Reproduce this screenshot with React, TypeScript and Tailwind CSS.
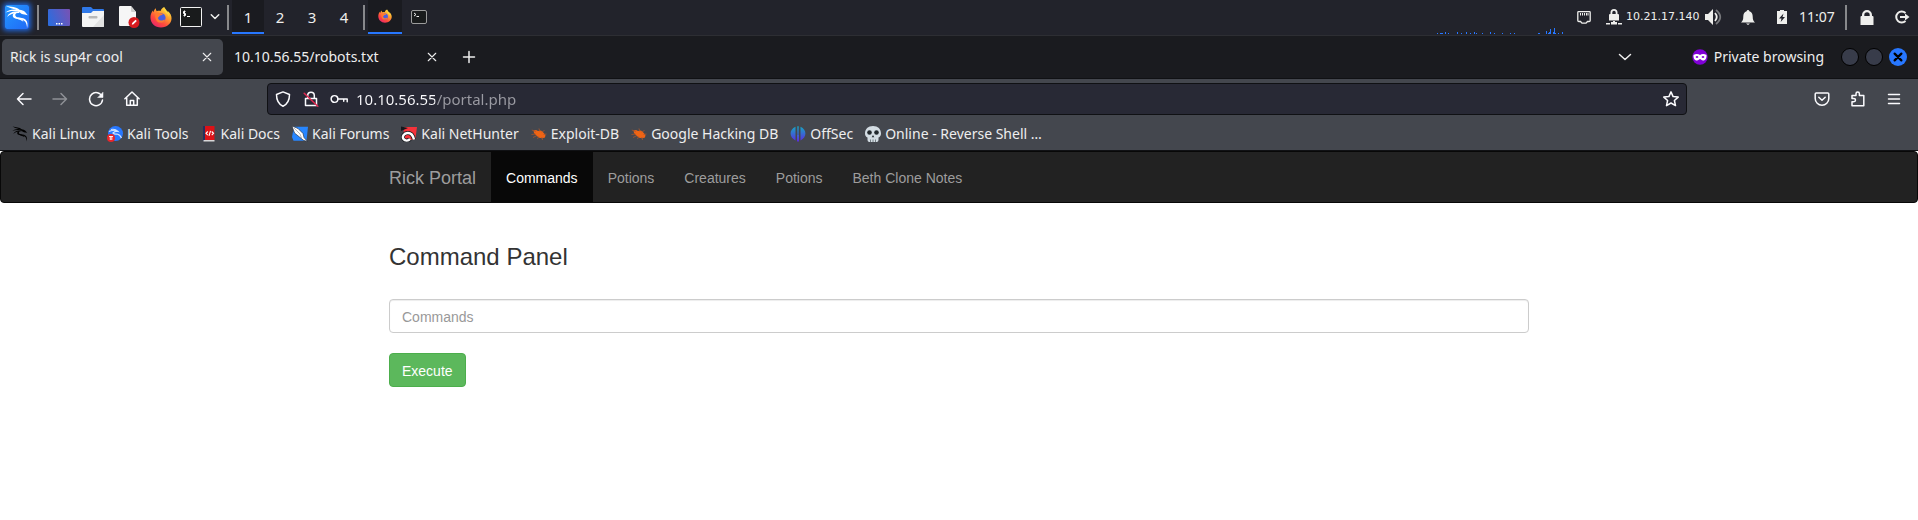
import React, { useState } from "react";

type IconProps = { className?: string };

function Firefox({ className }: IconProps) {
  return (
    <svg viewBox="0 0 24 24" className={className} aria-hidden="true">
      <defs>
        <linearGradient id="fx-body" x1="0.85" y1="0.05" x2="0.2" y2="0.95">
          <stop offset="0" stopColor="#fff04a" />
          <stop offset="0.35" stopColor="#ffa02e" />
          <stop offset="0.7" stopColor="#ff4a3d" />
          <stop offset="1" stopColor="#e8266a" />
        </linearGradient>
      </defs>
      <path d="M15.5 1c-.3 2.600 1.400 3.600 2.600 5.200.5.600.800 1.200 1 1.800.3-1 .2-2 0-2.900 3 2.300 4.400 5.200 4.400 8.300C23.500 19.200 18.500 23.500 12 23.500S.5 19 .5 12.600C.5 9.500 1.500 7 3.100 4.800c.1.800.3 1.400.6 1.900.500-1.700 1.300-3 2.600-4.200 0 1.300.4 2.400 1.100 3.200 1.300-.5 2.900-.6 4.200-.2C12 3.500 13.400 1.800 15.500 1z" fill="url(#fx-body)" />
      <circle cx="12" cy="12.800" r="5" fill="#4a5fe0" />
      <path d="M6 7.500c2-.700 4-.300 5.600.500l2.600.4c-.3 1.300-1.700 1.700-3 2-1.300.4-1 1.800-2.400 2.200-.300 2 1.200 3.400 3.300 3.200 1.800-.1 2.600-1 4.400-.9-1 2.600-3.200 3.500-5.300 3.200C7.300 17.600 5 14.500 6 7.500z" fill="#ff7a30" />
      <path d="M15.500 1c2 3.500 5.600 6 5.400 11.300-.5-2.300-1.700-3.800-3.300-4.800-1.500-1.500-3-3.500-2.100-6.500z" fill="#ffd83d" />
    </svg>
  );
}

function Dragon({ className }: IconProps) {
  return (
    <svg viewBox="0 0 24 24" className={className} fill="currentColor" aria-hidden="true">
      <path d="M.8.8C6 2 11.500 1.800 14.500 4.800c2.300.1 4.300.9 5.600 2.200l2.700 3.300-3.300-.7c-2.300-.2-4.200-1.300-5.300-2.800C11 3.700 5 3.800.8.8z" />
      <path d="M.5 7.500C4 4.600 9.500 3.400 14.500 5.800l.3 1.400C10 5.200 5 5.800.5 7.500z" />
      <path d="M2 12c2-4.500 6.500-6.300 12-5l.6 1C9 7.800 5 9 2 12z" />
      <path d="M9.300 7.800C7 9.500 7.400 12.300 9.700 13.300c3.300 1.400 8 .6 10.300 3.200 1.300 1.500 2 4 2 6.800 1-3.600.7-7-1.500-8.800-2.800-2.400-7-1.500-9.300-2.800-1.500-.9-1.200-2.700.600-3.900z" />
      <path d="M13 12.500c2.800.8 4.600 2 5.500 4l-1-.2c-1.500-1.200-3.300-1.800-6-2.800z" />
    </svg>
  );
}

function Kali() {
  return (
    <span className="flex size-6 items-center justify-center rounded-xs bg-linear-to-br from-[#2598ff] to-[#2268f5] text-white shadow-[0_0_5px_2px_#2065d8]">
      <Dragon className="size-6" />
    </span>
  );
}

function Desktop() {
  return (
    <svg viewBox="0 0 22 17" className="h-[17px] w-[22px]">
      <defs>
        <linearGradient id="desk" x1="0" y1="0.5" x2="1" y2="0.2">
          <stop offset="0" stopColor="#2f6bdc" />
          <stop offset="1" stopColor="#7653b5" />
        </linearGradient>
      </defs>
      <rect width="22" height="17" rx="1" fill="url(#desk)" />
      <path d="M8 14h1.500v1.500H8zM10.500 14H12v1.500h-1.500zM13 14h1.500v1.500H13z" fill="#fff" />
    </svg>
  );
}

function Folder() {
  return (
    <svg viewBox="0 0 22 20" className="h-5 w-[22px]">
      <path d="M0 1q0-1 1-1h8l2 2h10q1 0 1 1v6H0z" fill="#2f78e8" />
      <path d="M0 6h9l2-2h11v15q0 1-1 1H1q-1 0-1-1z" fill="#f4f4f4" />
      <path d="M22 8v11q0 1-1 1H11z" fill="#e2e2e2" />
      <rect x="6.500" y="9" width="9" height="2.500" rx="1" fill="#b9b9b9" />
    </svg>
  );
}

function Doc() {
  return (
    <svg viewBox="0 0 21 22" className="h-[22px] w-[21px]">
      <path d="M0 1q0-1 1-1h11l5 6v14H1q-1 0-1-1z" fill="#f6f6f6" />
      <path d="M12 0l5 6h-4q-1 0-1-1z" fill="#cfcfcf" />
      <circle cx="15" cy="16.500" r="5.500" fill="#d71a1f" />
      <path d="M12.800 18.700l.4-1.700 3.300-3.300 1.300 1.300-3.300 3.300z" fill="#fff" />
    </svg>
  );
}

function Terminal() {
  return (
    <svg viewBox="0 0 22 20" className="h-5 w-[22px]">
      <rect x="0.500" y="0.500" width="21" height="19" rx="1" fill="#191b1c" stroke="#f3f3f3" />
      <path d="M5.500 4.500H3.500v2h2v2h-2M4.500 3.500v6M7 9.500h3" fill="none" stroke="#fff" />
    </svg>
  );
}

function TerminalSmall() {
  return (
    <svg viewBox="0 0 16 14" className="h-3.5 w-4">
      <rect x="0.500" y="0.500" width="15" height="13" rx="1.500" fill="#191b1c" stroke="#9c9c9c" />
      <path d="M3 3l2 1.500L3 6M5.500 6.500H8" fill="none" stroke="#eee" />
    </svg>
  );
}

function Stroke({ children, className = "size-4", w = 1.5 }: { children: React.ReactNode; className?: string; w?: number }) {
  return (
    <svg viewBox="0 0 16 16" className={className} fill="none" stroke="currentColor" strokeWidth={w} strokeLinecap="round" strokeLinejoin="round" aria-hidden="true">
      {children}
    </svg>
  );
}

const trafficBars: [number, number, number][] = [
  [0, 1, 1], [3, 3, 1], [8, 1, 2], [11, 1, 1], [20, 1, 2], [24, 1, 1], [29, 1, 2], [33, 1, 1],
  [37, 1, 2], [39, 1, 1], [45, 1, 1], [53, 1, 2], [57, 1, 1], [65, 1, 1], [73, 1, 1], [77, 1, 1],
  [101, 2, 1], [109, 1, 3], [111, 1, 1], [112, 1, 2], [113, 1, 5], [116, 1, 2], [117, 1, 6], [118, 1, 1], [121, 1, 1], [125, 1, 2],
];

function Traffic() {
  return (
    <svg viewBox="0 0 126 6" className="h-1.5 w-[126px] self-end" shapeRendering="crispEdges" aria-hidden="true">
      {trafficBars.map(([x, w, h]) => (
        <rect key={x} x={x} y={6 - h} width={w} height={h} fill="#2777ff" />
      ))}
    </svg>
  );
}

function Separator() {
  return <span className="h-[25px] w-0.5 bg-[#88898c]" />;
}

function PanelButton({ label, className, children }: { label: string; className: string; children: React.ReactNode }) {
  return (
    <button type="button" aria-label={label} className={`flex h-full items-center justify-center ${className}`}>
      {children}
    </button>
  );
}

function Panel() {
  return (
    <header className="flex h-9 items-center justify-between border-b border-[#2d2e33] bg-[#22232b] text-[#eeeeec]">
      <div className="flex h-[34px] items-center self-start">
        <PanelButton label="Applications" className="w-[37px] pr-1"><Kali /></PanelButton>
        <Separator />
        <PanelButton label="Show desktop" className="ml-1 w-8"><Desktop /></PanelButton>
        <PanelButton label="Files" className="w-9"><Folder /></PanelButton>
        <PanelButton label="Text editor" className="w-9"><Doc /></PanelButton>
        <PanelButton label="Firefox" className="w-7"><Firefox className="size-[22px]" /></PanelButton>
        <PanelButton label="Terminal" className="w-8"><Terminal /></PanelButton>
        <PanelButton label="More terminals" className="w-5 pr-1">
          <Stroke className="size-3" w={2}><path d="M3 5l5 5 5-5" /></Stroke>
        </PanelButton>
        <Separator />
        <nav aria-label="Workspaces" className="ml-[3px] flex h-full text-[15px]">
          <button type="button" className="w-8 border-b-2 border-[#2777ff] bg-[#1a1b20] pt-0.5">1</button>
          <button type="button" className="w-8">2</button>
          <button type="button" className="w-8">3</button>
          <button type="button" className="w-8">4</button>
        </nav>
        <span className="ml-[3px] flex"><Separator /></span>
        <button type="button" aria-label="Firefox window" className="ml-[3px] flex h-full w-[34px] items-center justify-center border-b-2 border-[#2777ff] bg-[#1a1b20]">
          <Firefox className="size-3.5" />
        </button>
        <PanelButton label="Terminal window" className="w-[34px]"><TerminalSmall /></PanelButton>
      </div>
      <div className="flex h-[34px] items-center self-start">
        <Traffic />
        <svg viewBox="0 0 14 13" className="ml-3.5 h-[13px] w-3.5" aria-hidden="true">
          <path d="M1.500.7h11q.7 0 .7.700v8.100q0 1-1 1h-1.700l-1.500 1.700H5l-1.500-1.700H1.800q-1 0-1-1V1.400q0-.7.700-.7z" fill="none" stroke="currentColor" strokeWidth="1.300" />
          <path d="M3.500 2v2.500M5.500 2v2.500M7.500 2v2.500M9.500 2v2.500M11 2v2.500" stroke="currentColor" strokeWidth="1" />
        </svg>
        <svg viewBox="0 0 16 16" className="ml-[15px] size-4" fill="currentColor" aria-hidden="true">
          <path fillRule="evenodd" d="M4 5h.5V3.500a3.500 3.500 0 017 0V5h.5q1 0 1 1v5.500H3V6q0-1 1-1zM6.300 5h3.400V3.500a1.700 1.700 0 00-3.400 0z" />
          <path d="M7 12h2v1h2v2.500H5V13h2zM0 14h4v1.500H0zM12 14h4v1.500h-4z" />
        </svg>
        <span className="ml-1 w-[75px] font-['DejaVu_Sans'] text-[11px] whitespace-nowrap">10.21.17.140</span>
        <svg viewBox="0 0 18 16" className="ml-1 h-4 w-[18px]" aria-hidden="true">
          <path d="M0 5h3l5-5v16l-5-5H0z" fill="currentColor" />
          <path d="M10 4q3.500 4 0 8" fill="none" stroke="currentColor" strokeWidth="1.800" />
          <path d="M11 1q8.500 7 0 14" fill="none" stroke="#77787c" strokeWidth="1.800" />
        </svg>
        <svg viewBox="0 0 14 15" className="ml-[18px] h-[15px] w-3.5" fill="currentColor" aria-label="Notifications" role="img">
          <path d="M7 0q1.200 0 1.400 1.300C10.800 2 11.700 4 11.700 6.500c0 3.500.8 4.500 2.300 6H0c1.500-1.500 2.300-2.500 2.300-6C2.300 4 3.200 2 5.600 1.300Q5.800 0 7 0zM5 13.500h4L7 15z" />
        </svg>
        <svg viewBox="0 0 10 14" className="ml-[22px] h-3.5 w-2.5" aria-label="Battery charging" role="img">
          <path d="M3 0h4v1h3v13H0V1h3z" fill="currentColor" />
          <path d="M6.500 3.500L2 8.500h2.500L3.700 12 8 7H5.500z" fill="#22232b" />
        </svg>
        <time className="ml-3 w-[46px] text-sm">11:07</time>
        <Separator />
        <PanelButton label="Lock screen" className="w-[39px]">
          <svg viewBox="0 0 14 15" className="h-[15px] w-3.5" fill="currentColor">
            <path fillRule="evenodd" d="M.5 7q0-1 1-1H2V5a5 5 0 0110 0v1h.5q1 0 1 1v8H.5zM4.300 6h5.400V5a2.700 2.700 0 00-5.400 0z" />
          </svg>
        </PanelButton>
        <PanelButton label="Log out" className="w-8">
          <svg viewBox="0 0 16 16" className="size-4" fill="none" stroke="currentColor" strokeWidth="2">
            <path d="M11.500 4a5.500 5.500 0 100 8M6 8h6" />
            <path d="M11 4.500v7L15.500 8z" fill="currentColor" stroke="none" />
          </svg>
        </PanelButton>
      </div>
    </header>
  );
}

function Cross() {
  return <Stroke className="size-3" w={1.5}><path d="M3 3l10 10M13 3L3 13" /></Stroke>;
}

function TabBar() {
  return (
    <div className="flex h-[43px] items-center border-b border-[#101114] bg-[#1a1b1f] text-sm text-[#eeeeee]">
      <div role="tablist" aria-label="Tabs" className="flex h-9 items-center pl-0.5">
        <div className="flex h-full w-[221px] items-center justify-between rounded-[5px] bg-[#44474e] pr-2.5 pl-2">
          <button type="button" role="tab" aria-selected="true">Rick is sup4r cool</button>
          <button type="button" aria-label="Close tab"><Cross /></button>
        </div>
        <div className="ml-1 flex h-full w-[220px] items-center justify-between pr-[9px] pl-[7px]">
          <button type="button" role="tab" aria-selected="false">10.10.56.55/robots.txt</button>
          <button type="button" aria-label="Close tab"><Cross /></button>
        </div>
      </div>
      <button type="button" aria-label="New tab" className="ml-3.5"><Stroke><path d="M8 2.500v11M2.500 8h11" /></Stroke></button>
      <button type="button" aria-label="List all tabs" className="ml-auto"><Stroke><path d="M2.500 5.500L8 10.500l5.500-5" /></Stroke></button>
      <span className="ml-[59px] flex items-center gap-1.5">
        <svg viewBox="0 0 16 16" className="size-4" aria-hidden="true">
          <circle cx="8" cy="8" r="7.700" fill="#8000d7" />
          <path fillRule="evenodd" d="M1.500 6C4 4.500 6.500 5 8 6c1.500-1 4-1.500 6.500 0 .2 4-1.500 5.500-3.500 5.500-1.500 0-2.200-1.500-3-1.500s-1.500 1.500-3 1.500C3 11.500 1.300 10 1.500 6zM3.500 8q1.500 1.800 3 0-1.500-1.800-3 0zM9.500 8q1.500 1.800 3 0-1.500-1.800-3 0z" fill="#fff" />
        </svg>
        Private browsing
      </span>
      <div className="mr-[11px] ml-[17px] flex gap-1.5">
        <button type="button" aria-label="Minimize" className="size-[18px] rounded-full border border-black bg-[#383c4a]" />
        <button type="button" aria-label="Maximize" className="size-[18px] rounded-full border border-black bg-[#383c4a]" />
        <button type="button" aria-label="Close window" className="flex size-[18px] items-center justify-center rounded-full bg-[#2777ff] text-black">
          <Stroke className="size-3" w={3}><path d="M3.500 3.500l9 9M12.500 3.500l-9 9" /></Stroke>
        </button>
      </div>
    </div>
  );
}

function NavBar() {
  const [url, setUrl] = useState("10.10.56.55/portal.php");
  return (
    <div className="flex items-center bg-[#44474e] pt-1 text-[#fbfbfe]">
      <div className="flex w-[267px] gap-5 pl-4">
        <button type="button" aria-label="Back"><Stroke><path d="M15 8H1.500M7 2.500L1.500 8 7 13.500" /></Stroke></button>
        <button type="button" aria-label="Forward" className="text-[#8f9196]"><Stroke><path d="M1 8h13.500M9 2.500L14.500 8 9 13.500" /></Stroke></button>
        <button type="button" aria-label="Reload">
          <Stroke><path d="M14 5.500A6.500 6.500 0 1014.500 9" /><path d="M15 1.500v5h-5z" fill="currentColor" strokeWidth="0.500" /></Stroke>
        </button>
        <button type="button" aria-label="Home"><Stroke><path d="M.9 7.800L8 1l7.100 6.800M2.700 7v7.200h10.600V7M6.300 14V9.500h3.400V14" /></Stroke></button>
      </div>
      <div className="flex h-8 flex-1 items-center rounded-sm border border-[#101114] bg-[#282935] px-[7px]">
        <Stroke><path d="M8 .900l6.500 2.600C14.500 8.500 13 13 8 15.200 3 13 1.500 8.500 1.500 3.500z" /></Stroke>
        <Stroke className="ml-3 size-4"><path d="M2.500 7.500h11v7h-11zM4.700 7V4.500a3.300 3.300 0 016.600 0V7" /><path d="M1.200 2.200l13.600 13" stroke="#e22850" /></Stroke>
        <Stroke className="ml-[11px] size-[18px]" w={1.3}><circle cx="4" cy="8" r="3" /><path d="M7 8h8.300v2.500M12.200 8v2" /></Stroke>
        <input
          type="text"
          aria-label="Address"
          value={url}
          onChange={(e) => setUrl(e.target.value)}
          className="ml-2 min-w-0 flex-1 bg-[linear-gradient(to_right,#fbfbfe_79px,#9b9ba3_79px)] bg-clip-text text-[15px] text-transparent caret-white outline-none"
        />
        <button type="button" aria-label="Bookmark this page">
          <Stroke><path d="M8 .900l2.100 4.700 5.100.500-3.800 3.400 1.100 5.100L8 12l-4.500 2.600 1.100-5.100L.800 6.100l5.100-.5z" /></Stroke>
        </button>
      </div>
      <div className="flex w-[231px] justify-end gap-5 pr-4">
        <button type="button" aria-label="Save to Pocket"><Stroke><path d="M1.200 3q0-1 1-1h11.600q1 0 1 1v4.500a6.800 6.800 0 01-13.600 0zM4.800 6.300L8 9.300l3.200-3" /></Stroke></button>
        <button type="button" aria-label="Extensions"><Stroke><path d="M2 4.500h4V2.700a1.700 1.700 0 013.400 0v1.800h4.400V14.800H2v-4h1.800a1.700 1.700 0 000-3.400H2z" /></Stroke></button>
        <button type="button" aria-label="Open menu"><Stroke><path d="M2.500 3.500h11M2.500 8h11M2.500 12.500h11" /></Stroke></button>
      </div>
    </div>
  );
}

function Bug() {
  return (
    <svg viewBox="0 0 16 16" className="size-4" aria-hidden="true">
      <path d="M2.500 4.500L5 4l2 1 3-.5 2.500 2.300 2 2.200-.5 2.500-2.800.7-3-.5-2.700-2L3 7z" fill="#f06414" />
      <path d="M.5 8.500l4-.5M2 11.500l4-2M6.500 13l1.200-2.500M11.500 14l-.7-3M13.500 4.500l-3 1.500M8 2.500l.800 3M15.500 8l-3 .5M.8 4l4 1.500" stroke="#a9562b" strokeWidth="0.800" />
    </svg>
  );
}

const bookmarks: { name: string; icon: React.ReactNode }[] = [
  { name: "Kali Linux", icon: <Dragon className="size-4 text-black" /> },
  {
    name: "Kali Tools",
    icon: (
      <svg viewBox="0 0 16 16" className="size-4">
        <circle cx="8.500" cy="7.500" r="7.500" fill="#2777ff" />
        <path d="M2 5.500q4-2 8 0M4 3.500q4-1 7 2-3-.500-5 1.500 1.500 1.500 4 1 3 .500 4.500 4" fill="none" stroke="#cfe3ff" strokeWidth="1.200" />
        <circle cx="4" cy="12" r="4" fill="#e8262b" />
        <path d="M2 10.500h4M3.300 10.500V14M4.800 10.500V14" stroke="#fff" strokeWidth="0.900" />
      </svg>
    ),
  },
  {
    name: "Kali Docs",
    icon: (
      <svg viewBox="0 0 16 16" className="size-4">
        <path d="M2 0h2.500v15H2z" fill="#26305e" />
        <path d="M4 0h9.500v14H4z" fill="#dc1217" />
        <path d="M2.500 14h11v1.500h-11z" fill="#d8d8d8" />
        <path d="M6.800 5.500L5 7.300l1.800 1.800M10.700 5.500l1.800 1.800-1.800 1.800M9.500 4.800L8 9.800" fill="none" stroke="#fff" strokeWidth="1.100" />
      </svg>
    ),
  },
  {
    name: "Kali Forums",
    icon: (
      <svg viewBox="0 0 16 16" className="size-4">
        <path d="M2 .800h14l-1.500 14H1.500L0 11z" fill="#2786ff" />
        <path d="M0 0l6 2.500 5 5 1 4 3.500 4-4-1.200-4-3.300L2.500 7z" fill="#fff" stroke="#222631" strokeWidth="0.600" />
        <path d="M2 2l6 6 1.500 4" stroke="#777" strokeWidth="0.500" fill="none" />
      </svg>
    ),
  },
  {
    name: "Kali NetHunter",
    icon: (
      <svg viewBox="0 0 16 16" className="size-4">
        <path d="M3 1h13l-1.500 11-2 2H2z" fill="#f5323a" />
        <path d="M0 .500l7 1.500L0 5z" fill="#16181c" />
        <path d="M12.800 13.500C12 9 9.500 6.800 6.500 7 3 7.200.8 10.500 2.500 13c1.500 2.200 5 2 6.500 0" fill="none" stroke="#16181c" strokeWidth="4" />
        <path d="M13 13.500C12 9 9.500 6.800 6.500 7 3 7.200.8 10.500 2.500 13c1.500 2.200 5 2 6.500 0" fill="none" stroke="#fff" strokeWidth="2.400" />
      </svg>
    ),
  },
  { name: "Exploit-DB", icon: <Bug /> },
  { name: "Google Hacking DB", icon: <Bug /> },
  {
    name: "OffSec",
    icon: (
      <svg viewBox="0 0 16 16" className="size-4">
        <defs>
          <linearGradient id="offsec" x1="0" y1="0" x2="0" y2="1">
            <stop offset="0" stopColor="#16a8c4" />
            <stop offset="1" stopColor="#5a2be0" />
          </linearGradient>
        </defs>
        <path d="M5.500.800v13.700C-.8 11.500-1.300 4 5.500.800zM10.500.800v13.700c6.300-3 6.800-10.500 0-13.700zM7 .300h2V15.500H7z" fill="url(#offsec)" />
        <path d="M8 0v9" stroke="#44474e" strokeWidth="0.600" />
      </svg>
    ),
  },
  {
    name: "Online - Reverse Shell …",
    icon: (
      <svg viewBox="0 0 16 16" className="size-4">
        <path d="M8 0c5 0 8 3 8 7.500 0 2-1 3.500-2.500 4V14q0 1.500-1.500 2H4q-1.500-.5-1.500-2v-2.500C1 11 0 9.500 0 7.500 0 3 3 0 8 0z" fill="#d3dce3" />
        <circle cx="4.500" cy="6.500" r="2.300" fill="#20272c" />
        <circle cx="11.500" cy="6.500" r="2.300" fill="#20272c" />
        <path d="M8 9l1.300 2.300H6.700z" fill="#20272c" />
        <path d="M5.500 13.500V16M8 13.500V16M10.500 13.500V16" stroke="#5b646b" strokeWidth="0.800" />
      </svg>
    ),
  },
];

function Bookmarks() {
  return (
    <nav aria-label="Bookmarks" className="flex h-[35px] items-center gap-3 bg-[#44474e] pt-0.5 pl-3 text-sm text-[#eeeeee]">
      {bookmarks.map((b) => (
        <a key={b.name} href="#" className="flex items-center gap-1 whitespace-nowrap">
          {b.icon}
          {b.name}
        </a>
      ))}
    </nav>
  );
}

const links = ["Potions", "Creatures", "Potions", "Beth Clone Notes"];

function Page() {
  return (
    <div className="border-t border-[#101114] bg-white font-['Liberation_Sans',sans-serif] text-sm text-[#333]">
      <nav aria-label="Rick Portal" className="rounded-sm border border-[#080808] bg-[#222] text-[#9d9d9d]">
        <div className="mx-auto flex h-[50px] max-w-[1140px] items-stretch">
          <a href="#" className="flex items-center pt-0.5 pr-[15px] text-lg">Rick Portal</a>
          <a href="#" aria-current="page" className="flex items-center bg-[#080808] px-[15px] pt-0.5 text-white">Commands</a>
          {links.map((l, i) => (
            <a key={i} href="#" className="flex items-center px-[15px] pt-0.5">{l}</a>
          ))}
        </div>
      </nav>
      <main className="mx-auto max-w-[1140px] pt-10">
        <form onSubmit={(e) => e.preventDefault()}>
          <h3 className="text-2xl leading-7">
            <label htmlFor="command">Command Panel</label>
          </h3>
          <input
            id="command"
            type="text"
            placeholder="Commands"
            className="mt-7 block h-[34px] w-full rounded-sm border border-[#ccc] px-3 pt-0.5 shadow-[inset_0_1px_1px_rgba(0,0,0,0.075)] placeholder:text-[#999]"
          />
          <button type="submit" className="mt-5 block h-[34px] rounded-sm border border-[#4cae4c] bg-[#5cb85c] px-3 pt-0.5 text-white">Execute</button>
        </form>
      </main>
    </div>
  );
}

export default function App() {
  return (
    <div className="min-h-screen bg-white font-['Noto_Sans',sans-serif]">
      <Panel />
      <TabBar />
      <NavBar />
      <Bookmarks />
      <Page />
    </div>
  );
}
